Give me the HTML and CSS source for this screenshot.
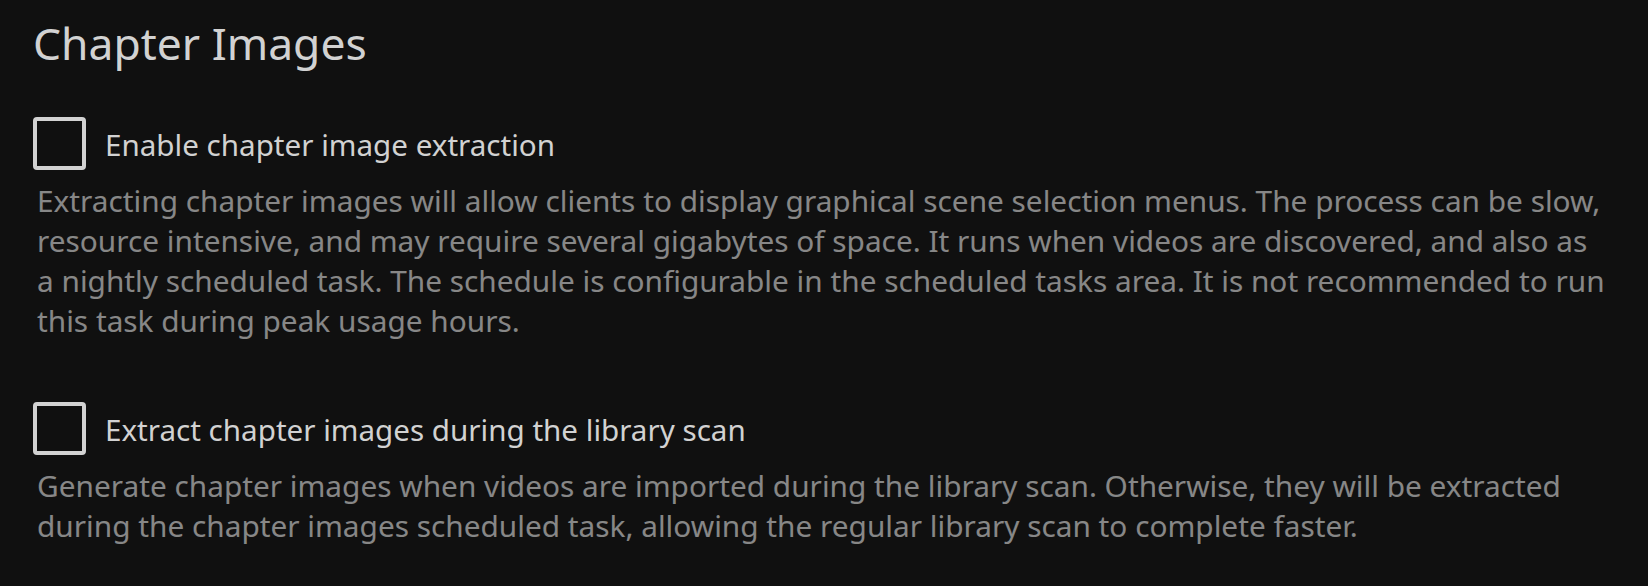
FILE: index.html
```html
<!DOCTYPE html>
<html lang="en">
<head>
<meta charset="utf-8">
<title>Chapter Images</title>
<link rel="stylesheet" href="styles.css">
</head>
<body>
<section class="section">
  <h2 class="section-title">Chapter Images</h2>

  <div class="field">
    <label class="check-row">
      <span class="checkbox"></span>
      <span class="check-label">Enable chapter image extraction</span>
    </label>
    <div class="field-desc">Extracting chapter images will allow clients to display graphical scene selection menus. The process can be slow, resource intensive, and may require several gigabytes of space. It runs when videos are discovered, and also as a nightly scheduled task. The schedule is configurable in the scheduled tasks area. It is not recommended to run this task during peak usage hours.</div>
  </div>

  <div class="field">
    <label class="check-row">
      <span class="checkbox"></span>
      <span class="check-label">Extract chapter images during the library scan</span>
    </label>
    <div class="field-desc">Generate chapter images when videos are imported during the library scan. Otherwise, they will be extracted during the chapter images scheduled task, allowing the regular library scan to complete faster.</div>
  </div>
</section>
</body>
</html>
```

FILE: styles.css
```css
html, body {
  margin: 0;
  padding: 0;
  background: #101010;
}

body {
  font-family: "Noto Sans", "Open Sans", sans-serif;
  font-size: 29.6px;
  line-height: 1.5;
  color: rgba(255, 255, 255, 0.82);
}

.section {
  padding: 0 42px 0 33px;
}

.section-title {
  margin: 17px 0 47px 0;
  font-size: 44.4px;
  font-weight: 400;
  line-height: 1.2;
}

.field {
  margin-bottom: 61px;
}

.check-row {
  display: flex;
  align-items: center;
  gap: 19px;
}

.checkbox {
  box-sizing: border-box;
  width: 53px;
  height: 53px;
  border: 4px solid #d2d2d2;
  border-radius: 4px;
  flex: none;
}

.check-label {
  line-height: 44px;
  position: relative;
  top: 1px;
}

.field-desc {
  margin-top: 11px;
  padding-left: 4px;
  font-size: 29.8px;
  line-height: 40px;
  color: rgba(255, 255, 255, 0.5);
}
```
